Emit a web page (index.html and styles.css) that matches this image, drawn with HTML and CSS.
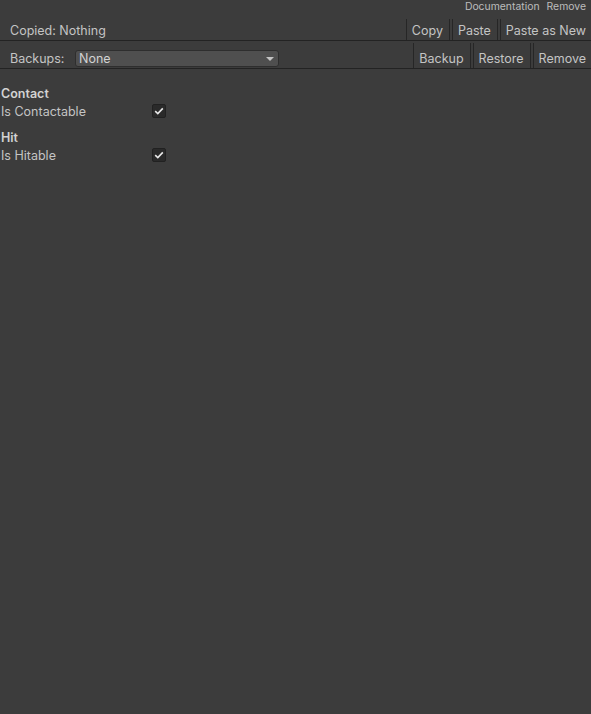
FILE: index.html
```html
<!DOCTYPE html>
<html lang="en">
<head>
    <meta charset="UTF-8">
    <title>Inspector</title>
    <link rel="stylesheet" href="styles.css">
</head>
<body>
    <div class="header-links">
        <span>Documentation</span>
        <span>Remove</span>
    </div>

    <div class="toolbar toolbar-copy">
        <span class="toolbar-label">Copied: Nothing</span>
        <div class="toolbar-buttons">
            <button class="tb-btn">Copy</button>
            <button class="tb-btn">Paste</button>
            <button class="tb-btn">Paste as New</button>
        </div>
    </div>

    <div class="toolbar toolbar-backup">
        <span class="toolbar-label">Backups:</span>
        <div class="dropdown">
            <span>None</span>
            <span class="dropdown-arrow"></span>
        </div>
        <div class="toolbar-buttons">
            <button class="tb-btn">Backup</button>
            <button class="tb-btn">Restore</button>
            <button class="tb-btn">Remove</button>
        </div>
    </div>

    <div class="fields">
        <div class="group">
            <div class="group-title">Contact</div>
            <div class="field">
                <label>Is Contactable</label>
                <span class="toggle">
                    <svg width="10" height="8" viewBox="0 0 10 8"><path d="M1.2 4.2 L3.8 6.6 L8.8 1.4" fill="none" stroke="#e8e8e8" stroke-width="1.6"/></svg>
                </span>
            </div>
        </div>
        <div class="group">
            <div class="group-title">Hit</div>
            <div class="field">
                <label>Is Hitable</label>
                <span class="toggle">
                    <svg width="10" height="8" viewBox="0 0 10 8"><path d="M1.2 4.2 L3.8 6.6 L8.8 1.4" fill="none" stroke="#e8e8e8" stroke-width="1.6"/></svg>
                </span>
            </div>
        </div>
    </div>
</body>
</html>
```

FILE: styles.css
```css
html, body { height: 100%; }
body { margin: 0; background-color: #3c3c3c; color: #c4c4c4; font-family: Inter, "Liberation Sans", sans-serif; font-size: 12.5px; }

.header-links { height: 19px; box-sizing: border-box; padding: 1px 5px 0 0; display: flex; justify-content: flex-end; align-items: flex-start; gap: 7px; font-size: 10.4px; line-height: 12px; color: #bdbdbd; }

.toolbar { display: flex; border-bottom: 1px solid #232323; }
.toolbar-copy { height: 21px; align-items: center; }
.toolbar-copy .toolbar-label { padding-top: 1px; }
.toolbar-backup { height: 25px; margin-top: 2px; align-items: flex-end; }
.toolbar-label { padding-left: 10px; line-height: 19px; }
.toolbar-backup .toolbar-label { width: 65px; }
.toolbar-buttons { margin-left: auto; display: flex; align-self: stretch; gap: 2px; }
.tb-btn { font: inherit; color: #c4c4c4; background: #3c3c3c; border: none; border-left: 1px solid #262626; border-right: 1px solid #262626; padding: 1px 6px 0 5px; cursor: pointer; }
.tb-btn:last-child { border-right: none; padding-right: 5px; }
.toolbar-backup .tb-btn { padding-top: 6px; }

.dropdown { width: 204px; height: 17px; box-sizing: border-box; margin-bottom: 1px; display: flex; align-items: center; justify-content: space-between; padding: 0 4px 0 3px; background: #4f4f4f; border: 1px solid #2e2e2e; border-radius: 3px; color: #d2d2d2; }
.dropdown-arrow { width: 0; height: 0; border-left: 4px solid transparent; border-right: 4px solid transparent; border-top: 4px solid #c4c4c4; }

.fields { padding: 15px 0 0 1px; }
.group { margin-bottom: 8px; }
.group-title { font-weight: 600; color: #d2d2d2; line-height: 16px; padding-top: 2px; }
.field { display: flex; align-items: center; height: 18px; }
.field label { width: 151px; }
.toggle { width: 14px; height: 14px; box-sizing: border-box; display: flex; align-items: center; justify-content: center; background: #2a2a2a; border: 1px solid #212121; border-radius: 2px; }
```
